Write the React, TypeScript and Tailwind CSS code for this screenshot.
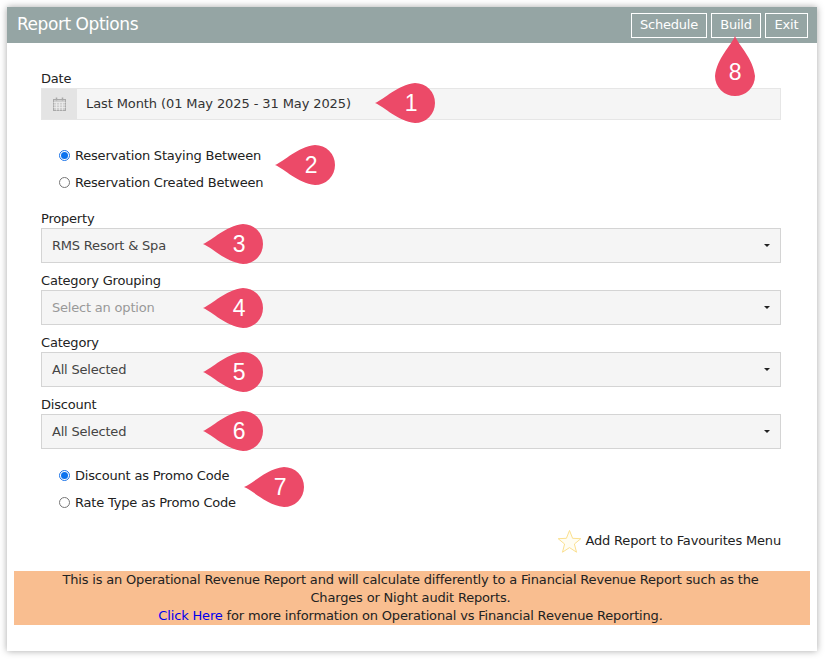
import React from "react";

function Pin({ n, className }: { n: string; className: string }) {
  return (
    <div className={`absolute w-[60px] h-10 flex items-center justify-end pr-[4px] ${className}`}>
      <svg className="absolute left-0 top-0" width="60" height="40" viewBox="0 0 60 40">
        <path d="M0 20 C10 16 22 2 40 0 A20 20 0 0 1 40 40 C22 38 10 24 0 20Z" fill="#ec4a68" />
      </svg>
      <span className="relative w-10 text-center text-white text-[23px] leading-none font-['Liberation_Sans',sans-serif]">{n}</span>
    </div>
  );
}

function Radio({ checked, label }: { checked?: boolean; label: string }) {
  return (
    <div className="flex items-center h-[27px]">
      {checked ? (
        <span className="w-[11px] h-[11px] rounded-full border border-[#1a73e8] bg-white flex items-center justify-center">
          <span className="w-[7px] h-[7px] rounded-full bg-[#0b72ee]" />
        </span>
      ) : (
        <span className="w-[11px] h-[11px] rounded-full border border-[#767676] bg-white" />
      )}
      <span className="ml-[5px]">{label}</span>
    </div>
  );
}

function SelectField({ label, value, muted }: { label: string; value: string; muted?: boolean }) {
  return (
    <div className="mb-[7px]">
      <div className="h-[20px] leading-[22px]">{label}</div>
      <div className="h-[35px] border border-[#d4d4d4] bg-[#f5f5f5] flex items-center justify-between pl-[10px] pr-[10px]">
        <span className={muted ? "text-[#999999]" : "text-[#444444]"}>{value}</span>
        <span className="w-0 h-0 border-l-[3px] border-r-[3px] border-t-[3px] border-l-transparent border-r-transparent border-t-[#222222]" />
      </div>
    </div>
  );
}

export default function App() {
  return (
    <div className="w-[825px] h-[659px] bg-white p-[7px] overflow-hidden text-[13px] text-[#222222] font-['DejaVu_Sans',sans-serif] tracking-[-0.2px]">
      <div className="relative w-[810px] h-[644px] bg-white shadow-[0_0_7px_rgba(0,0,0,0.35)]">
        <div className="h-9 bg-[#95a5a4] flex items-center justify-between pl-[10px] pr-[9px]">
          <span className="text-white text-[17px] tracking-[-0.45px]">Report Options</span>
          <div className="flex gap-1">
            <button className="h-[25px] w-[76px] border border-white text-white text-[13px]">Schedule</button>
            <button className="h-[25px] w-[50px] border border-white text-white text-[13px]">Build</button>
            <button className="h-[25px] w-[43px] border border-white text-white text-[13px]">Exit</button>
          </div>
        </div>

        <div className="pl-[34px] pr-[36px] pt-[25px]">
          <div className="h-5 leading-[22px]">Date</div>
          <div className="flex h-8 border border-[#e6e6e6] bg-[#f5f5f5]">
            <div className="w-[35px] bg-[#e4e4e4] flex items-center justify-center">
              <svg width="13" height="14" viewBox="0 0 13 14" fill="none" stroke="#a9a9a9">
                <rect x="0.5" y="2.5" width="12" height="11" fill="#cfcfcf" />
                <path d="M0.5 5.5H12.5M0.5 8H12.5M0.5 10.5H12.5M3.5 5.5V13.5M6.5 5.5V13.5M9.5 5.5V13.5" stroke="#eeeeee" strokeWidth="0.8" />
                <path d="M3.5 0.5V3.5M9.5 0.5V3.5" strokeWidth="1.5" />
              </svg>
            </div>
            <div className="flex items-center pl-[9px] text-[#333333] tracking-[-0.1px]">Last Month (01 May 2025 - 31 May 2025)</div>
          </div>

          <div className="pl-[18px] pt-[22px] pb-[12px]">
            <Radio checked label="Reservation Staying Between" />
            <Radio label="Reservation Created Between" />
          </div>

          <SelectField label="Property" value="RMS Resort & Spa" />
          <SelectField label="Category Grouping" value="Select an option" muted />
          <SelectField label="Category" value="All Selected" />
          <SelectField label="Discount" value="All Selected" />

          <div className="pl-[18px] pt-[6px]">
            <Radio checked label="Discount as Promo Code" />
            <Radio label="Rate Type as Promo Code" />
          </div>

          <div className="flex items-center justify-end mt-[11px] h-[28px] tracking-[-0.17px]">
            <svg width="25" height="25" viewBox="0 0 25 25" className="mr-[3px]">
              <path d="M12.5 1.5 L15.6 9.3 L23.8 9.7 L17.4 15 L19.5 23.2 L12.5 18.6 L5.5 23.2 L7.6 15 L1.2 9.7 L9.4 9.3Z" fill="#fffdf2" stroke="#fbe08f" strokeWidth="1" />
            </svg>
            <span>Add Report to Favourites Menu</span>
          </div>
        </div>

        <div className="mt-[16px] ml-[7px] mr-[7px] bg-[#f9be90] text-center leading-[18px] pl-10 pr-[43px] tracking-[-0.17px]">
          <p>This is an Operational Revenue Report and will calculate differently to a Financial Revenue Report such as the Charges or Night audit Reports.</p>
          <p><a className="text-[#0000ee]">Click Here</a> for more information on Operational vs Financial Revenue Reporting.</p>
        </div>

        <Pin n="1" className="left-[368px] top-[76px]" />
        <Pin n="2" className="left-[268px] top-[138px]" />
        <Pin n="3" className="left-[196px] top-[217px]" />
        <Pin n="4" className="left-[196px] top-[281px]" />
        <Pin n="5" className="left-[196px] top-[345px]" />
        <Pin n="6" className="left-[196px] top-[404px]" />
        <Pin n="7" className="left-[237px] top-[460px]" />

        <div className="absolute left-[708px] top-[29px] w-10 h-[60px] flex items-end">
          <svg className="absolute left-0 top-0" width="40" height="60" viewBox="0 0 40 60">
            <path d="M20 0 C24 10 38 22 40 40 A20 20 0 0 1 0 40 C2 22 16 10 20 0Z" fill="#ec4a68" />
          </svg>
          <span className="relative w-10 h-10 mb-[4px] flex items-center justify-center text-white text-[23px] leading-none font-['Liberation_Sans',sans-serif]">8</span>
        </div>
      </div>
    </div>
  );
}
